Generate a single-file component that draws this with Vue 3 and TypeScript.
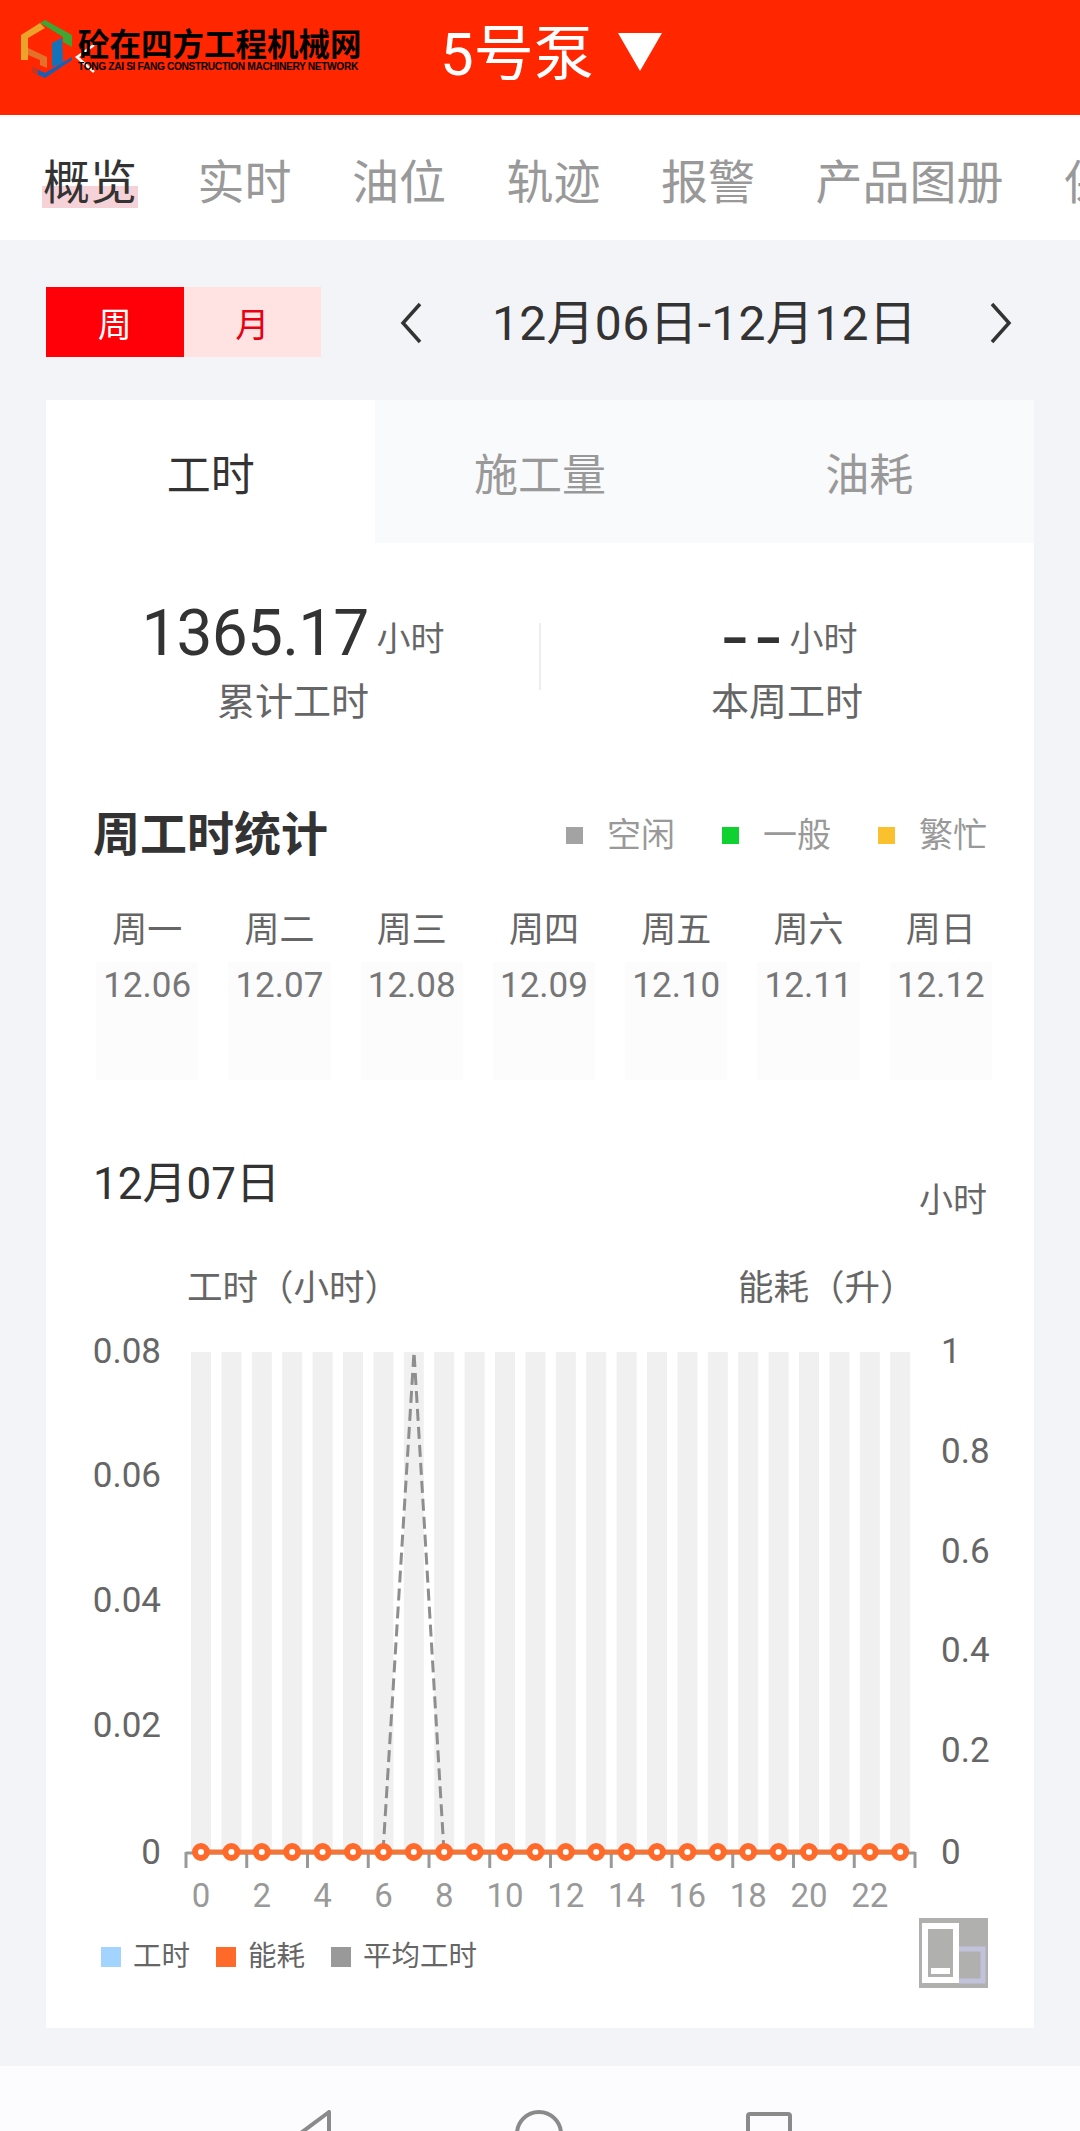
<script setup lang="ts">
const tabs: string[] = ['概览', '实时', '油位', '轨迹', '报警', '产品图册', '保养']
const metricTabs: string[] = ['工时', '施工量', '油耗']
const statusLegend: { label: string; color: string }[] = [
  { label: '空闲', color: '#a3a3a3' },
  { label: '一般', color: '#0fd130' },
  { label: '繁忙', color: '#fbc02d' }
]
const days: { name: string; date: string }[] = [
  { name: '周一', date: '12.06' },
  { name: '周二', date: '12.07' },
  { name: '周三', date: '12.08' },
  { name: '周四', date: '12.09' },
  { name: '周五', date: '12.10' },
  { name: '周六', date: '12.11' },
  { name: '周日', date: '12.12' }
]
const hours: number[] = Array.from({ length: 24 }, (_, i) => i)
const cx = (h: number): number => 201 + h * 30.4
const leftAxis: { t: string; y: number }[] = [
  { t: '0.08', y: 1363 },
  { t: '0.06', y: 1487 },
  { t: '0.04', y: 1612 },
  { t: '0.02', y: 1737 },
  { t: '0', y: 1864 }
]
const rightAxis: { t: string; y: number }[] = [
  { t: '1', y: 1363 },
  { t: '0.8', y: 1463 },
  { t: '0.6', y: 1563 },
  { t: '0.4', y: 1662 },
  { t: '0.2', y: 1762 },
  { t: '0', y: 1864 }
]
const ticks: number[] = Array.from({ length: 13 }, (_, i) => 186 + i * 60.75)
const chartLegend: { label: string; color: string }[] = [
  { label: '工时', color: '#a3d3ff' },
  { label: '能耗', color: '#ff6a2b' },
  { label: '平均工时', color: '#999999' }
]
</script>

<template>
  <div class="page">
    <header class="topbar">
      <div class="brand">
        <svg class="logo" width="54" height="60" viewBox="20 19 54 60">
          <path d="M40 23 45 20 72 35V47L63 42V37L47 27Z" fill="#3fa535" />
          <path d="M21 35 40 23 45 28 28 38V60L21 60Z" fill="#eda22a" />
          <path d="M28 48 47 57V68L40 65V60L28 55Z" fill="#e5702a" />
          <path d="M52 43 62 38 63 63 52 67Z" fill="#1473b8" />
          <path d="M32 67 45 73 72 57V60L45 78 32 72Z" fill="#1a5fb4" />
          <path d="M32 67 38 70V75L32 72Z" fill="#c8341e" />
        </svg>
        <div class="brand-text">
          <div class="brand-cn">砼在四方工程机械网</div>
          <div class="brand-en">TONG ZAI SI FANG CONSTRUCTION MACHINERY NETWORK</div>
        </div>
        <svg class="back" width="22" height="30" viewBox="0 0 22 30">
          <path d="M20 2 3 14 20 29" fill="none" stroke="#fff" stroke-width="2.5" />
        </svg>
      </div>
      <div class="title">5号泵</div>
      <svg class="caret" width="44" height="38" viewBox="0 0 44 38">
        <path d="M0 0H44L22 38Z" fill="#fff" />
      </svg>
    </header>

    <nav class="tabs">
      <span v-for="(t, i) in tabs" :key="t" class="tab" :class="{ active: i === 0 }">{{ t }}</span>
    </nav>

    <main class="main">
      <section class="controls">
        <div class="toggle">
          <div class="toggle-btn on">周</div>
          <div class="toggle-btn">月</div>
        </div>
        <svg class="chev prev" width="24" height="42" viewBox="0 0 24 42">
          <path d="M21 2 4 21 21 40" fill="none" stroke="#333" stroke-width="3.5" />
        </svg>
        <div class="range">12月06日-12月12日</div>
        <svg class="chev next" width="24" height="42" viewBox="0 0 24 42">
          <path d="M3 2 20 21 3 40" fill="none" stroke="#333" stroke-width="3.5" />
        </svg>
      </section>

      <section class="card">
        <div class="metric-tabs">
          <div v-for="(m, i) in metricTabs" :key="m" class="metric-tab" :class="{ active: i === 0 }">{{ m }}</div>
        </div>

        <div class="card-body">
          <div class="stats">
            <div class="stat">
              <div class="stat-value"><span class="num">1365.17</span><span class="unit">小时</span></div>
              <div class="stat-label">累计工时</div>
            </div>
            <div class="stat">
              <div class="stat-value"><span class="dash">--</span><span class="unit">小时</span></div>
              <div class="stat-label">本周工时</div>
            </div>
          </div>

          <div class="section-head">
            <h2 class="section-title">周工时统计</h2>
            <div class="status-legend">
              <div v-for="s in statusLegend" :key="s.label" class="status-item">
                <i class="status-dot" :style="{ background: s.color }"></i>
                <span>{{ s.label }}</span>
              </div>
            </div>
          </div>

          <div class="week">
            <div v-for="d in days" :key="d.date" class="day">
              <div class="day-name">{{ d.name }}</div>
              <div class="day-cell">{{ d.date }}</div>
            </div>
          </div>

          <div class="date-row">
            <div class="date-current">12月07日</div>
            <div class="date-unit">小时</div>
          </div>

          <svg class="chart" width="988" height="696" viewBox="46 1222 988 696">
            <text class="axis-title" x="187" y="1300">工时（小时）</text>
            <text class="axis-title" x="738" y="1300">能耗（升）</text>
            <rect v-for="h in hours" :key="'b' + h" :x="cx(h) - 10" y="1352" width="20" height="500" fill="#f0f0f1" />
            <text v-for="l in leftAxis" :key="'l' + l.t" class="axis-y" x="161" :y="l.y" text-anchor="end">{{ l.t }}</text>
            <text v-for="r in rightAxis" :key="'r' + r.t" class="axis-y" x="941" :y="r.y">{{ r.t }}</text>
            <line x1="186" y1="1853" x2="915" y2="1853" stroke="#999" stroke-width="3" />
            <line v-for="t in ticks" :key="'t' + t" :x1="t" y1="1852" :x2="t" y2="1868" stroke="#999" stroke-width="3" />
            <path d="M383 1852 414 1352 444 1852" fill="none" stroke="#8e8e8e" stroke-width="3" stroke-dasharray="12 6" />
            <line x1="201" y1="1852" x2="900" y2="1852" stroke="#f0763a" stroke-width="5" />
            <circle v-for="h in hours" :key="'c' + h" :cx="cx(h)" cy="1852" r="6" fill="#fff" stroke="#ff6a2b" stroke-width="6" />
            <template v-for="h in hours" :key="'x' + h">
              <text v-if="h % 2 === 0" class="axis-x" :x="cx(h)" y="1907" text-anchor="middle">{{ h }}</text>
            </template>
          </svg>

          <div class="legend-row">
            <div class="chart-legend">
              <div v-for="c in chartLegend" :key="c.label" class="legend-item">
                <i class="legend-swatch" :style="{ background: c.color }"></i>
                <span>{{ c.label }}</span>
              </div>
            </div>
            <svg class="switch" width="69" height="70" viewBox="0 0 69 70">
              <rect width="69" height="70" fill="#b0b0ae" />
              <rect x="3" y="5" width="37" height="60" fill="#fff" />
              <rect x="9" y="11" width="25" height="48" fill="#b0b0ae" />
              <rect x="12" y="50" width="19" height="6" fill="#fff" />
              <path d="M40 31H64V63H40" fill="none" stroke="#c2c2dc" stroke-width="5" />
            </svg>
          </div>
        </div>
      </section>
    </main>

    <footer class="sysnav">
      <svg width="58" height="80" viewBox="0 0 58 80">
        <path d="M54 2V78L3 40Z" fill="none" stroke="#8a8a8a" stroke-width="4" stroke-linejoin="round" />
      </svg>
      <svg width="48" height="80" viewBox="0 0 48 80">
        <circle cx="24" cy="24" r="22" fill="none" stroke="#8a8a8a" stroke-width="4" />
      </svg>
      <svg width="48" height="80" viewBox="0 0 48 80">
        <rect x="3" y="4" width="42" height="60" rx="2" fill="none" stroke="#8a8a8a" stroke-width="4" />
      </svg>
    </footer>
  </div>
</template>

<style>
html,
body {
  margin: 0;
  background: #f3f4f8;
}
</style>

<style scoped>
.page {
  width: 1080px;
  height: 2131px;
  overflow: hidden;
  display: flex;
  flex-direction: column;
  background: #f3f4f8;
  font-family: Roboto, "Noto Sans CJK SC", sans-serif;
  color: #333;
}
.topbar {
  height: 115px;
  flex: none;
  display: flex;
  align-items: center;
  background: #ff2600;
  box-sizing: border-box;
  padding-left: 20px;
}
.brand {
  position: relative;
  display: flex;
  align-items: center;
  width: 342px;
  height: 60px;
  margin-top: -17px;
}
.brand-text {
  position: relative;
  z-index: 1;
  margin-left: 4px;
  margin-top: 2px;
  width: 284px;
  color: #000;
}
.brand-cn {
  font-family: "Noto Sans CJK SC", sans-serif;
  font-size: 31.5px;
  line-height: 30px;
  font-weight: 700;
  white-space: nowrap;
}
.brand-en {
  font-family: "Liberation Sans", sans-serif;
  font-size: 10.2px;
  line-height: 13px;
  margin-top: 3px;
  font-weight: 700;
  white-space: nowrap;
  letter-spacing: -0.35px;
}
.back {
  position: absolute;
  left: 54px;
  top: 24px;
}
.title {
  margin-left: 78px;
  color: #fff;
  font-size: 60px;
  line-height: 70px;
  margin-top: -5px;
  font-family: Roboto, "Noto Sans CJK SC", sans-serif;
}
.caret {
  margin-left: 24px;
  margin-top: -12px;
}
.tabs {
  height: 125px;
  flex: none;
  box-sizing: border-box;
  display: flex;
  align-items: center;
  gap: 60.5px;
  padding: 10px 0 0 43px;
  background: #fff;
  overflow: hidden;
}
.tab {
  position: relative;
  isolation: isolate;
  flex: none;
  font-size: 47px;
  line-height: 60px;
  color: #999;
  white-space: nowrap;
}
.tab.active {
  color: #333;
}
.tab.active::before {
  content: "";
  position: absolute;
  left: -1px;
  right: -1px;
  top: 33px;
  height: 22px;
  background: #f5d2d8;
  z-index: -1;
}
.main {
  flex: 1;
  min-height: 0;
  padding: 47px 46px 0;
}
.controls {
  height: 70px;
  display: flex;
  align-items: center;
}
.toggle {
  display: flex;
  width: 275px;
  height: 70px;
}
.toggle-btn {
  flex: 1;
  display: flex;
  align-items: center;
  justify-content: center;
  font-size: 34px;
  background: #ffe3e3;
  color: #e60012;
}
.toggle-btn.on {
  background: #ff0009;
  color: #fff;
}
.prev {
  margin-left: 78px;
}
.range {
  margin-left: 69px;
  margin-top: 4px;
  width: 422px;
  font-size: 48px;
  line-height: 60px;
  white-space: nowrap;
  letter-spacing: 0.3px;
  color: #333;
}
.next {
  margin-left: 75px;
}
.chev {
  margin-top: 2px;
}
.card {
  margin-top: 43px;
}
.metric-tabs {
  display: grid;
  grid-template-columns: repeat(3, 1fr);
  height: 143px;
  background: #f9fafb;
}
.metric-tab {
  display: flex;
  align-items: center;
  justify-content: center;
  font-size: 44px;
  color: #999;
}
.metric-tab.active {
  background: #fff;
  color: #333;
}
.card-body {
  background: #fff;
  height: 1485px;
  box-sizing: border-box;
}
.stats {
  display: grid;
  grid-template-columns: 1fr 1fr;
  padding-top: 53px;
  position: relative;
}
.stats::after {
  content: "";
  position: absolute;
  left: 493px;
  top: 80px;
  width: 2px;
  height: 67px;
  background: #eeeeee;
}
.stat {
  display: flex;
  flex-direction: column;
  align-items: center;
}
.stat-value {
  display: flex;
  align-items: flex-start;
  height: 76px;
  line-height: 76px;
}
.num {
  font-size: 64px;
  color: #333;
  letter-spacing: -0.8px;
}
.dash {
  display: block;
  font-family: "Liberation Sans", sans-serif;
  font-size: 72px;
  letter-spacing: 4px;
  color: #333;
  margin-left: 9px;
  transform: scaleX(1.2);
}
.unit {
  margin-left: 8px;
  margin-top: 21px;
  font-size: 34px;
  line-height: 44px;
  color: #666;
}
.stat-label {
  margin-top: 5px;
  font-size: 38px;
  line-height: 50px;
  color: #666;
}
.section-head {
  margin-top: 78px;
  height: 60px;
  display: flex;
  align-items: center;
  justify-content: space-between;
  padding: 0 47px;
}
.section-title {
  margin: 0;
  font-size: 47px;
  line-height: 60px;
  font-weight: 700;
  color: #333;
}
.status-legend {
  display: flex;
  gap: 47px;
}
.status-item {
  display: flex;
  align-items: center;
  font-size: 34px;
  line-height: 44px;
  color: #999;
}
.status-dot {
  width: 17px;
  height: 17px;
  margin-right: 24px;
}
.week {
  display: grid;
  grid-template-columns: repeat(7, 1fr);
  column-gap: 24px;
  margin-top: 44px;
  padding: 0 39px 0 47px;
}
.day {
  text-align: center;
}
.day-name {
  font-size: 35px;
  line-height: 44px;
  color: #666;
  white-space: nowrap;
}
.day-cell {
  margin: 9px 3px 0;
  height: 118px;
  background: #fcfcfd;
  font-size: 35px;
  line-height: 48px;
  color: #777;
}
.date-row {
  margin-top: 80px;
  height: 62px;
  display: flex;
  justify-content: space-between;
  padding: 0 47px;
}
.date-current {
  font-size: 44px;
  line-height: 48px;
  color: #333;
}
.date-unit {
  align-self: flex-end;
  font-size: 34px;
  line-height: 44px;
  color: #666;
}
.chart {
  display: block;
}
.axis-title {
  font-size: 35.5px;
  fill: #666;
}
.axis-y {
  font-size: 35px;
  fill: #666;
}
.axis-x {
  font-size: 33px;
  fill: #999;
}
.legend-row {
  height: 70px;
  display: flex;
  align-items: center;
  justify-content: space-between;
  padding: 0 46px 0 55px;
}
.chart-legend {
  display: flex;
  gap: 26px;
  padding-top: 8px;
}
.legend-item {
  display: flex;
  align-items: center;
  font-size: 28.5px;
  line-height: 36px;
  color: #666;
}
.legend-swatch {
  width: 20px;
  height: 20px;
  margin-right: 12px;
}
.sysnav {
  flex: none;
  height: 65px;
  box-sizing: border-box;
  padding: 44px 287px 0 275px;
  display: flex;
  justify-content: space-between;
  background: #fcfcfe;
  overflow: hidden;
}
.sysnav svg {
  flex: none;
}
</style>
